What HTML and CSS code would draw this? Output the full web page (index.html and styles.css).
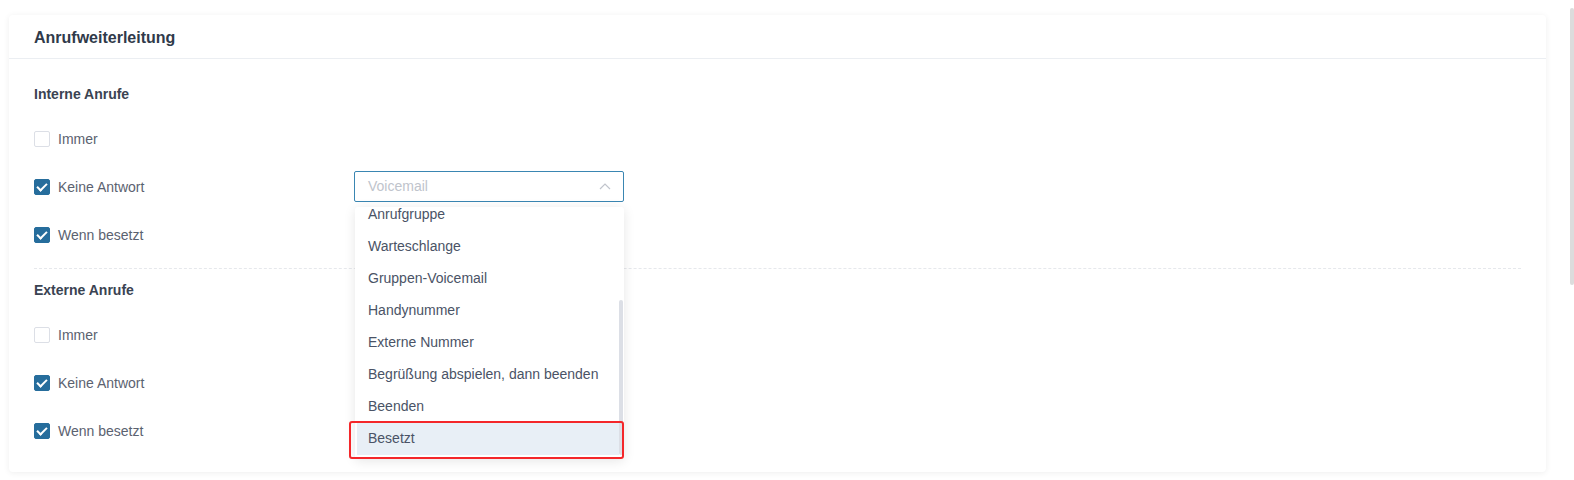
FILE: index.html
```html
<!DOCTYPE html>
<html lang="de">
<head>
    <meta charset="UTF-8">
    <title>Anrufweiterleitung</title>
    <link rel="stylesheet" href="styles.css">
</head>
<body>
    <div class="page">
        <div class="main">
            <div class="card">
                <div class="card-header">Anrufweiterleitung</div>
                <div class="card-body">
                    <div class="group">
                        <div class="group-title">Interne Anrufe</div>
                        <div class="row">
                            <label class="check"><span class="box"></span>Immer</label>
                        </div>
                        <div class="row">
                            <label class="check"><span class="box checked"></span>Keine Antwort</label>
                            <div class="select-wrap">
                                <div class="select">
                                    <span class="placeholder">Voicemail</span>
                                    <svg class="arrow" width="12" height="8" viewBox="0 0 12 8"><path d="M1 7 L6 2 L11 7" fill="none" stroke="#c0c4cc" stroke-width="1.2"/></svg>
                                </div>
                                <div class="dropdown">
                                    <ul class="options">
                                        <li>Anrufgruppe</li>
                                        <li>Warteschlange</li>
                                        <li>Gruppen-Voicemail</li>
                                        <li>Handynummer</li>
                                        <li>Externe Nummer</li>
                                        <li>Begrüßung abspielen, dann beenden</li>
                                        <li>Beenden</li>
                                        <li class="hover">Besetzt</li>
                                    </ul>
                                    <div class="thumb"></div>
                                    <div class="mark"></div>
                                </div>
                            </div>
                        </div>
                        <div class="row">
                            <label class="check"><span class="box checked"></span>Wenn besetzt</label>
                        </div>
                    </div>
                    <div class="divider"></div>
                    <div class="group">
                        <div class="group-title">Externe Anrufe</div>
                        <div class="row">
                            <label class="check"><span class="box"></span>Immer</label>
                        </div>
                        <div class="row">
                            <label class="check"><span class="box checked"></span>Keine Antwort</label>
                        </div>
                        <div class="row">
                            <label class="check"><span class="box checked"></span>Wenn besetzt</label>
                        </div>
                    </div>
                </div>
            </div>
        </div>
        <div class="scrollbar"><div class="scroll-thumb"></div></div>
    </div>
</body>
</html>
```
FILE: styles.css
```css
html, body
{
    margin: 0;
    padding: 0;
    background: #fff;
    font-family: "Liberation Sans", Arial, sans-serif;
    overflow: hidden;
}
.page
{
    display: flex;
    height: 480px;
}
.main
{
    flex: 1;
    padding: 15px 0 0 9px;
}
.scrollbar
{
    width: 4px;
    padding-top: 8px;
}
.scroll-thumb
{
    height: 277px;
    background: #dcdcdc;
    border-radius: 2px;
}
.card
{
    width: 1537px;
    height: 457px;
    box-sizing: border-box;
    background: #fff;
    border-radius: 4px;
    box-shadow: 0 1px 6px rgba(0, 0, 0, 0.07);
}
.card-header
{
    height: 43px;
    line-height: 45px;
    padding-left: 25px;
    border-bottom: 1px solid #ebeef2;
    font-size: 16px;
    font-weight: bold;
    color: #303a4a;
}
.card-body
{
    padding: 25px 25px 0 25px;
}
.group-title
{
    height: 20px;
    line-height: 21px;
    font-size: 14px;
    font-weight: bold;
    color: #3a4352;
    margin-bottom: 10px;
}
.row
{
    display: flex;
    align-items: center;
    height: 48px;
}
.check
{
    display: flex;
    align-items: center;
    width: 320px;
    padding-top: 1px;
    font-size: 14px;
    color: #5b6270;
}
.box
{
    width: 14px;
    height: 14px;
    margin-right: 8px;
    border: 1px solid #dcdfe6;
    border-radius: 2px;
    position: relative;
}
.box.checked
{
    background: #266d9c;
    border-color: #266d9c;
}
.box.checked::after
{
    content: "";
    position: absolute;
    left: 4px;
    top: 1px;
    width: 4px;
    height: 8px;
    border: solid #fff;
    border-width: 0 2px 2px 0;
    transform: rotate(45deg);
}
.divider
{
    margin: 10px 0 11px 0;
    border-top: 1px dashed #e6e8ec;
}
.select-wrap
{
    position: relative;
}
.select
{
    width: 270px;
    height: 31px;
    box-sizing: border-box;
    border: 1px solid #3a86b2;
    border-radius: 2px;
    display: flex;
    align-items: center;
    justify-content: space-between;
    padding: 0 12px 0 13px;
    font-size: 14px;
}
.placeholder
{
    color: #c0c4cc;
}
.dropdown
{
    position: absolute;
    left: 1px;
    top: 36px;
    width: 269px;
    height: 252px;
    background: #fff;
    border-radius: 3px;
    box-shadow: 0 2px 12px rgba(0, 0, 0, 0.1);
    z-index: 5;
}
.options
{
    list-style: none;
    margin: 0;
    padding: 0;
    height: 248px;
    overflow: hidden;
}
.options li
{
    height: 30px;
    line-height: 30px;
    padding-bottom: 2px;
    padding-left: 13px;
    font-size: 14px;
    color: #4a5366;
    margin-right: 5px;
}
.options li:first-child
{
    margin-top: -8px;
}
.options li.hover
{
    background: #e8eff6;
    margin-left: 2px;
    padding-left: 11px;
}
.thumb
{
    position: absolute;
    right: 1px;
    top: 93px;
    width: 4px;
    height: 155px;
    background: #dcdfe6;
    border-radius: 2px;
}
.mark
{
    position: absolute;
    left: -6px;
    top: 214px;
    width: 271px;
    height: 34px;
    border: 2px solid #f4272a;
    border-radius: 3px;
}
```
